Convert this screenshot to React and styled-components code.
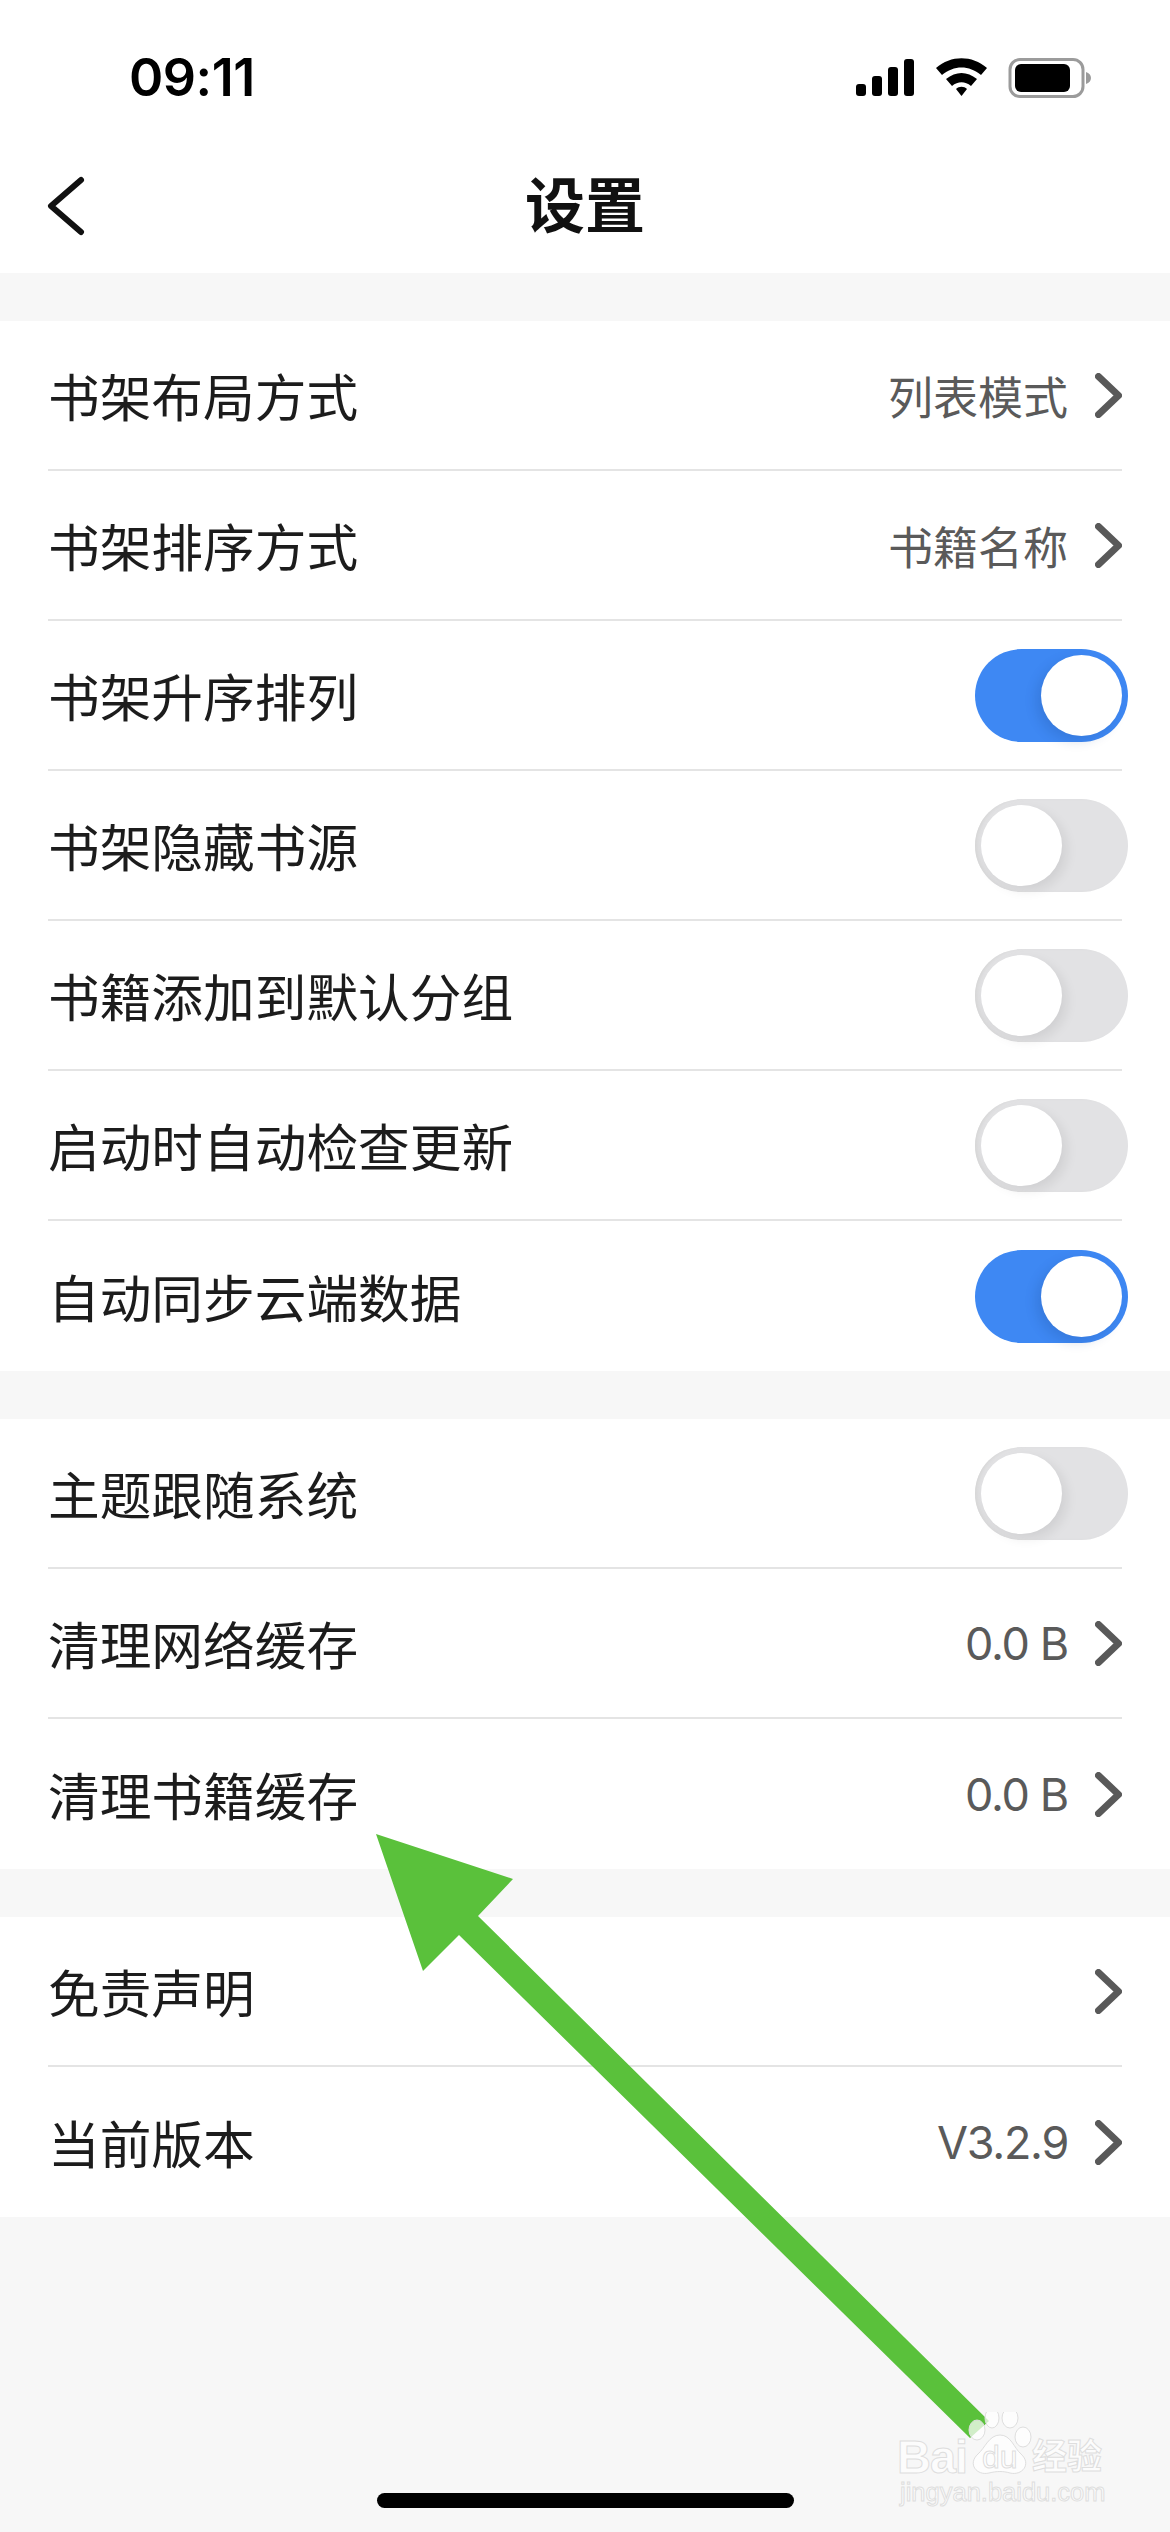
import React from "react";
import styled, { createGlobalStyle } from "styled-components";

const GlobalStyle = createGlobalStyle`
    html, body {
        margin: 0;
        padding: 0;
        background: #f7f7f7;
    }
`;

const Screen = styled.div`
    width: 1170px;
    height: 2532px;
    position: relative;
    overflow: hidden;
    display: flex;
    flex-direction: column;
    background: #f7f7f7;
    font-family: "Noto Sans CJK SC", sans-serif;
`;

const StatusBar = styled.div`
    height: 137px;
    padding: 59px 79px 0 129px;
    box-sizing: border-box;
    background: #fff;
    display: flex;
    justify-content: space-between;
    align-items: flex-start;
`;

const Clock = styled.div`
    font-family: "Inter", sans-serif;
    font-size: 52px;
    font-weight: 600;
    line-height: 38px;
    letter-spacing: -0.5px;
    color: #000;
`;

const StatusIcons = styled.svg`
    display: block;
    margin-top: -1px;
`;

const NavBar = styled.div`
    height: 136px;
    background: #fff;
    display: grid;
    grid-template-columns: 1fr auto 1fr;
    align-items: center;
`;

const BackIcon = styled.svg`
    display: block;
    margin: 2px 0 0 44px;
`;

const Title = styled.div`
    font-size: 60px;
    font-weight: 700;
    color: #111;
    line-height: 1;
    margin-top: -6px;
`;

const Section = styled.div`
    background: #fff;
    margin-top: 48px;
    padding: 0 48px;
`;

const Row = styled.div`
    height: 150px;
    box-sizing: border-box;
    display: flex;
    align-items: center;
    justify-content: space-between;
    border-bottom: 2px solid #e4e4e4;
    &:last-child {
        border-bottom: none;
    }
`;

const Label = styled.div`
    font-size: 51.7px;
    color: #1c1c1c;
    line-height: 1;
`;

const Right = styled.div`
    display: flex;
    align-items: center;
    gap: 27px;
`;

const Value = styled.div`
    font-size: 45px;
    color: #5a5a5a;
    line-height: 1;
    font-family: ${(p) => (p.$latin ? '"Inter", sans-serif' : "inherit")};
    letter-spacing: ${(p) => (p.$latin ? "-1.3px" : "0")};
`;

const Chevron = styled.svg`
    display: block;
`;

const Track = styled.div`
    width: 153px;
    height: 93px;
    margin-right: -6px;
    border-radius: 47px;
    background: ${(p) => (p.$on ? "#3e88f3" : "#e2e2e4")};
    box-shadow: ${(p) => (p.$on ? "none" : "inset 4px 0 4px -2px #d4d4d4")};
    position: relative;
`;

const Knob = styled.div`
    width: 81px;
    height: 81px;
    border-radius: 50%;
    background: #fff;
    position: absolute;
    top: 6px;
    left: ${(p) => (p.$on ? "66px" : "6px")};
    box-shadow: ${(p) => (p.$on ? "-5px 5px 12px rgba(20, 60, 130, 0.18)" : "5px 5px 12px rgba(0, 0, 0, 0.08)")};
`;

const HomeBar = styled.div`
    width: 417px;
    height: 15px;
    margin: auto auto 24px;
    border-radius: 8px;
    background: #000;
`;

const ArrowOverlay = styled.svg`
    position: absolute;
    left: 0;
    top: 0;
    pointer-events: none;
`;

const Watermark = styled.div`
    position: absolute;
    left: 897px;
    top: 2412px;
    width: 215px;
    height: 100px;
    color: rgba(255, 255, 255, 0.72);
    -webkit-text-stroke: 1px #dedede;
`;

const PawIcon = styled.svg`
    position: absolute;
    left: 70px;
    top: 0;
`;

const WmBai = styled.div`
    position: absolute;
    left: 0;
    top: 20px;
    font-family: "Liberation Sans", sans-serif;
    font-size: 47px;
    font-weight: 700;
    line-height: 49px;
    letter-spacing: -1px;
`;

const WmDu = styled.div`
    position: absolute;
    left: 85px;
    top: 29px;
    font-family: "Liberation Sans", sans-serif;
    font-size: 32px;
    line-height: 32px;
`;

const WmCn = styled.div`
    position: absolute;
    left: 135px;
    top: 22px;
    font-size: 35px;
    font-weight: 700;
    line-height: 40px;
`;

const WmUrl = styled.div`
    position: absolute;
    left: 3px;
    top: 65px;
    font-family: "Liberation Sans", sans-serif;
    font-size: 25.5px;
    line-height: 30px;
`;

const ChevronRight = () => (
    <Chevron width="27" height="45" viewBox="0 0 27 45">
        <path d="M3.500 3.500 L23.500 22.500 L3.500 41.500" fill="none" stroke="#595959" strokeWidth="7" strokeLinecap="round" strokeLinejoin="round" />
    </Chevron>
);

const Toggle = ({ on }) => (
    <Track $on={on}>
        <Knob $on={on} />
    </Track>
);

const groups = [
    [
        { label: "书架布局方式", value: "列表模式" },
        { label: "书架排序方式", value: "书籍名称" },
        { label: "书架升序排列", toggle: true, on: true },
        { label: "书架隐藏书源", toggle: true },
        { label: "书籍添加到默认分组", toggle: true },
        { label: "启动时自动检查更新", toggle: true },
        { label: "自动同步云端数据", toggle: true, on: true },
    ],
    [
        { label: "主题跟随系统", toggle: true },
        { label: "清理网络缓存", value: "0.0 B", latin: true },
        { label: "清理书籍缓存", value: "0.0 B", latin: true },
    ],
    [
        { label: "免责声明" },
        { label: "当前版本", value: "V3.2.9", latin: true },
    ],
];

export default function App() {
    return (
        <Screen>
            <GlobalStyle />
            <StatusBar>
                <Clock>09:11</Clock>
                <StatusIcons width="236" height="40" viewBox="0 0 236 40">
                    <rect x="1" y="26" width="10" height="12" rx="3" />
                    <rect x="17" y="18" width="10" height="20" rx="3" />
                    <rect x="33" y="9" width="10" height="29" rx="3" />
                    <rect x="49" y="1" width="10" height="37" rx="3" />
                    <path d="M81 10 C96 -3 117 -3 132 10 L126 17 C114 7 99 7 87 17 Z" />
                    <path d="M91 21 C101 13 112 13 122 21 L116 28 C110 23 103 23 97 28 Z" />
                    <path d="M101 31 C104 28 109 28 112 31 L106.500 38 Z" />
                    <rect x="155" y="1.500" width="73" height="37" rx="10" fill="none" stroke="#9b9b9b" strokeWidth="3" />
                    <rect x="160" y="6" width="55" height="28" rx="6" />
                    <path d="M231 14 C234 15 236 17 236 20 C236 23 234 25 231 26 Z" fill="#9b9b9b" />
                </StatusIcons>
            </StatusBar>
            <NavBar>
                <BackIcon width="44" height="64" viewBox="0 0 44 64">
                    <path d="M37 6 L7 32 L37 58" fill="none" stroke="#111" strokeWidth="6" strokeLinecap="round" strokeLinejoin="round" />
                </BackIcon>
                <Title>设置</Title>
            </NavBar>
            {groups.map((rows, i) => (
                <Section key={i}>
                    {rows.map((r) => (
                        <Row key={r.label}>
                            <Label>{r.label}</Label>
                            <Right>
                                {r.toggle ? (
                                    <Toggle on={r.on} />
                                ) : (
                                    <>
                                        {r.value && <Value $latin={r.latin}>{r.value}</Value>}
                                        <ChevronRight />
                                    </>
                                )}
                            </Right>
                        </Row>
                    ))}
                </Section>
            ))}
            <HomeBar />
            <ArrowOverlay width="1170" height="2532" viewBox="0 0 1170 2532">
                <polygon points="376,1834 513,1879 478,1916 989,2421 970,2438 459,1935 423,1971" fill="#5ac13b" />
            </ArrowOverlay>
            <Watermark>
                <PawIcon width="70" height="70" viewBox="0 0 70 70" fill="currentColor" stroke="#dedede" strokeWidth="1">
                    <ellipse cx="10" cy="18" rx="8" ry="10" />
                    <ellipse cx="25" cy="6" rx="7" ry="10" />
                    <ellipse cx="43" cy="6" rx="8" ry="10" />
                    <ellipse cx="56" cy="25" rx="8" ry="10" />
                    <path d="M33 23 C44 23 47 36 54 42 C65 52 55 64 43 61 C36 59 30 59 22 61 C10 64 0 52 11 42 C18 36 22 23 33 23 Z" />
                </PawIcon>
                <WmBai>Bai</WmBai>
                <WmDu>du</WmDu>
                <WmCn>经验</WmCn>
                <WmUrl>jingyan.baidu.com</WmUrl>
            </Watermark>
        </Screen>
    );
}
